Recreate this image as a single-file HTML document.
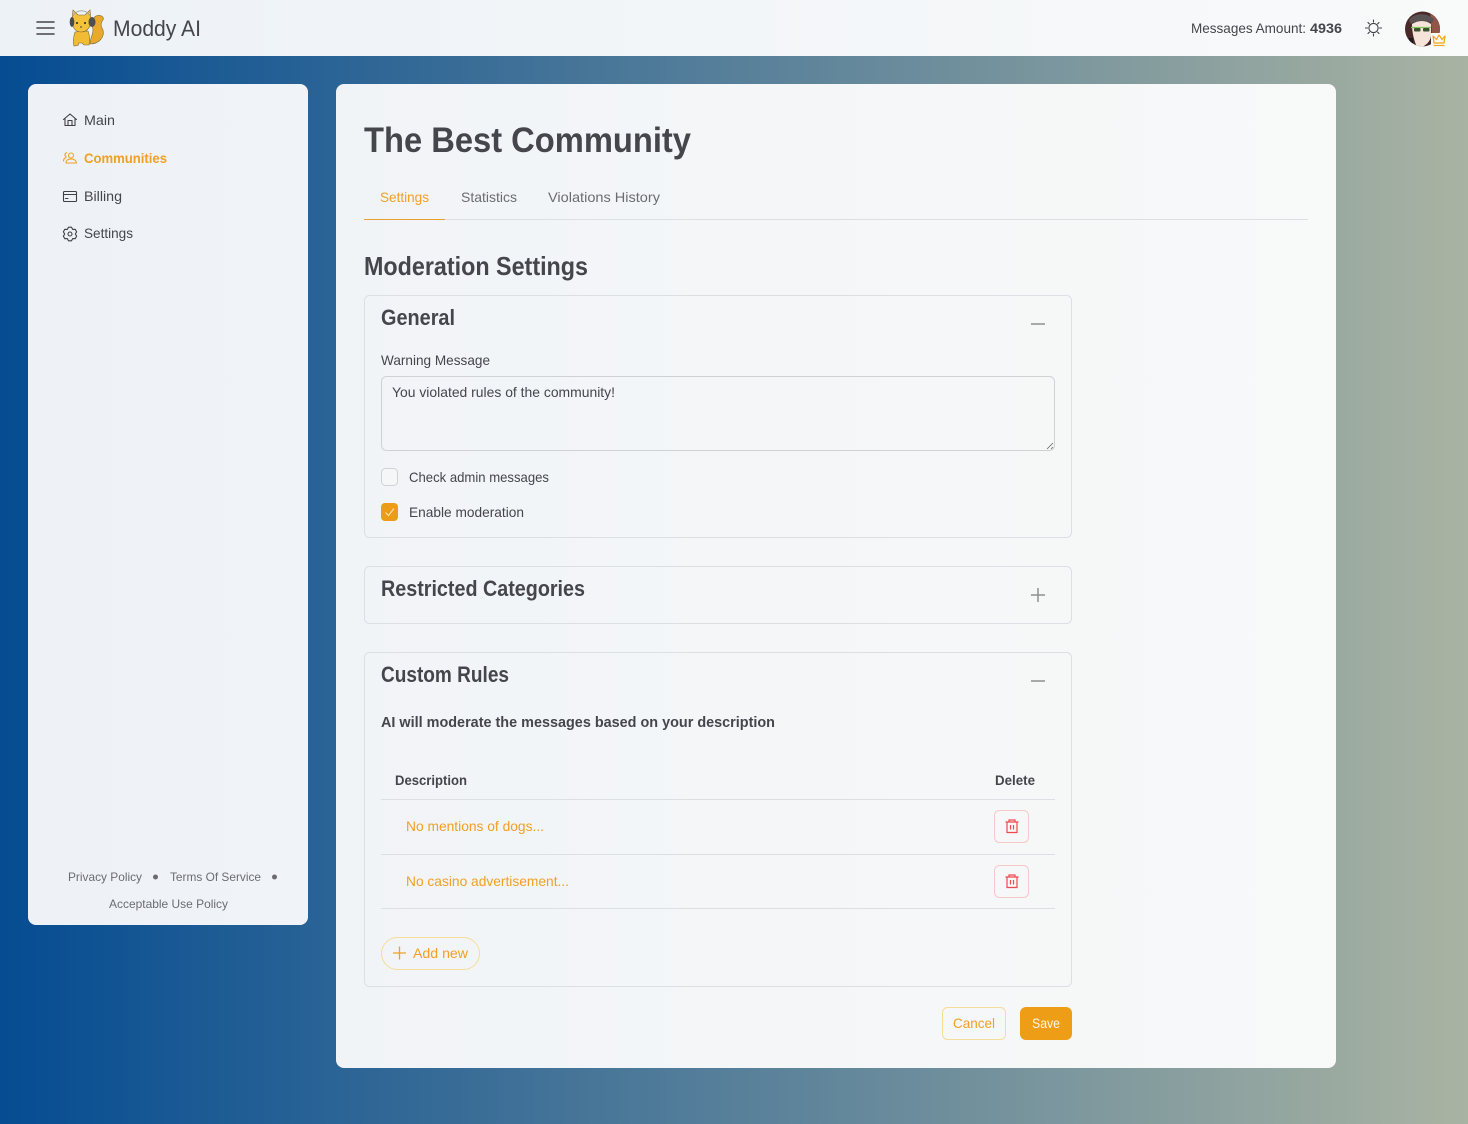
<!DOCTYPE html>
<html lang="en"><head><meta charset="utf-8"><title>Moddy AI</title>
<style>
html,body{margin:0;padding:0;width:1468px;height:1124px;overflow:hidden;background:#fff}
svg{display:block}
text{font-family:"Liberation Sans",Arial,sans-serif;fill:#45454c;font-size:14px}
.b{font-weight:700}
.o{fill:#f0a024}
.i{fill:none;stroke:#3f3f46;stroke-width:1.1;stroke-linecap:round;stroke-linejoin:round}
.g{fill:#6c6c70}
.card{fill:none;stroke:#dcdfe4;stroke-width:1}
.ln{stroke:#dcdfe4;stroke-width:1}
</style></head><body>
<svg width="1468" height="1124" viewBox="0 0 1468 1124" xmlns="http://www.w3.org/2000/svg">
<defs>
<linearGradient id="bg" x1="0" y1="0" x2="1" y2="0"><stop offset="0" stop-color="#054c92"/><stop offset="1" stop-color="#a9b3a2"/></linearGradient>
<linearGradient id="hd" x1="0" y1="0" x2="1" y2="0"><stop offset="0" stop-color="#edf2f7"/><stop offset="1" stop-color="#f9fafa"/></linearGradient>
<linearGradient id="sb" x1="0" y1="0" x2="1" y2="0"><stop offset="0" stop-color="#eef2f7"/><stop offset="1" stop-color="#f0f3f7"/></linearGradient>
<linearGradient id="mn" x1="0" y1="0" x2="1" y2="0"><stop offset="0" stop-color="#f1f4f7"/><stop offset="1" stop-color="#f8f9f9"/></linearGradient>
<clipPath id="av"><circle cx="1422.5" cy="29" r="17.5"/></clipPath>
</defs>
<rect width="1468" height="1124" fill="url(#bg)"/>
<rect width="1468" height="56" fill="url(#hd)"/>
<rect x="28" y="84" width="280" height="841" rx="8" fill="url(#sb)"/>
<rect x="336" y="84" width="1000" height="984" rx="8" fill="url(#mn)"/>

<!-- header -->
<path d="M37 22H54M37 28H54M37 34H54" stroke="#45454c" stroke-width="1.6" fill="none" stroke-linecap="round"/>
<g stroke="#7a6a3a" stroke-width=".6">
<path d="M90 44C98 44 105 38 103 30C101 26 100 24 103 20C105 17 100 14 96 16C92 18 92 24 93 30C93 35 90 38 90 44Z" fill="#e9a92b"/>
<path d="M75 32C73 38 73 42 74 46L78 45.500L79 43L82 43L84 45L89 45C90 40 90 36 88 31Z" fill="#f1bb34"/>
<path d="M73 10L78 15H85L90 10L91 20C91 27 87 32 81 32C75 32 72 27 72 20Z" fill="#f3c23a"/>
</g>
<path d="M73 16C76 9 87 9 90 16" fill="none" stroke="#a8a8a4" stroke-width="1"/>
<ellipse cx="72" cy="22" rx="2.300" ry="5" fill="#4b4b4b"/>
<ellipse cx="92" cy="22" rx="3.500" ry="5" fill="#4f4f50"/>
<circle cx="77" cy="23" r="1" fill="#222"/><circle cx="85" cy="23" r="1" fill="#222"/>
<path d="M80 27h2" stroke="#443" stroke-width="1"/>
<text x="113" y="36" style="font-size:22px" fill="#45454c" textLength="88" lengthAdjust="spacingAndGlyphs">Moddy AI</text>

<text x="1191" y="33" textLength="115" lengthAdjust="spacingAndGlyphs">Messages Amount:</text>
<text x="1310" y="33" class="b" textLength="32" lengthAdjust="spacingAndGlyphs">4936</text>
<g class="i"><circle cx="1373.5" cy="28" r="4.6"/><path d="M1373.5 20v2M1373.5 34v2M1365.5 28h2M1379.5 28h2M1368 22.5l1.3 1.3M1379 22.5l-1.3 1.3M1368 33.5l1.3-1.3M1379 33.5l-1.3-1.3"/></g>
<g clip-path="url(#av)">
<rect x="1405" y="11" width="36" height="36" fill="#4a2a28"/>
<path d="M1430 11h11v24l-9 0Z" fill="#935548"/>
<path d="M1409 20C1414 13 1426 12 1434 19L1432 23C1426 20 1416 20 1411 24Z" fill="#5a5254"/>
<path d="M1412 24C1418 20 1426 20 1431 24L1431 36C1430 42 1426 45 1422 47L1417 47C1414 41 1412 32 1412 24Z" fill="#f4e4da"/>
<path d="M1411 27.500H1431" stroke="#83c85e" stroke-width="1.300"/>
<rect x="1414" y="28" width="6.500" height="3.500" rx="1" fill="#39512f"/><rect x="1423" y="28" width="6.500" height="3.500" rx="1" fill="#39512f"/>
<path d="M1409 38h4v5h-4z" fill="#1f1a1c"/>
</g>
<rect x="1431" y="33" width="17" height="15" fill="#f9fafa"/>
<path d="M1433 36L1436.500 39.500L1439 35L1442 39.500L1445 36L1444 43H1434Z" fill="#fdf8ea" stroke="#f2a51f" stroke-width="1.200" stroke-linejoin="round"/>
<path d="M1433.500 45.500H1444.500" stroke="#f2a51f" stroke-width="1.200"/>

<!-- sidebar -->
<g class="i"><path d="M63.500 119.500L70 114L76.500 119.500M65 118.500V125.500H75V118.500M68 125.500V120.500H72V125.500"/></g>
<text x="84" y="125" textLength="31" lengthAdjust="spacingAndGlyphs">Main</text>
<g class="i" style="stroke:#f0a024"><circle cx="71" cy="155.500" r="2.500"/><path d="M66 163C66 160 68 159 71 159C74 159 76 160 76.500 163ZM63.500 161C63.500 159 64.500 158 66 157.500M66.500 152.800A2 2 0 0 0 66 156.500"/></g>
<text x="84" y="163" class="b o" textLength="83" lengthAdjust="spacingAndGlyphs">Communities</text>
<g class="i"><rect x="63.500" y="191.500" width="13" height="10" rx="1"/><path d="M63.500 194.500H76.500M65.500 198.500H68"/></g>
<text x="84" y="201" textLength="38" lengthAdjust="spacingAndGlyphs">Billing</text>
<g class="i"><path d="M68.540 227.150L71.460 227.150L72.650 229.410L75.200 229.320L76.660 231.840L75.300 234L76.660 236.160L75.200 238.680L72.650 238.590L71.460 240.850L68.540 240.850L67.350 238.590L64.800 238.680L63.340 236.160L64.700 234L63.340 231.840L64.800 229.320L67.350 229.410Z"/><circle cx="70" cy="234" r="2"/></g>
<text x="84" y="238" textLength="49" lengthAdjust="spacingAndGlyphs">Settings</text>

<text x="68" y="881" class="g" style="font-size:12px" textLength="74" lengthAdjust="spacingAndGlyphs">Privacy Policy</text>
<circle cx="155.500" cy="877" r="2.500" fill="#6c6c70"/>
<text x="170" y="881" class="g" style="font-size:12px" textLength="91" lengthAdjust="spacingAndGlyphs">Terms Of Service</text>
<circle cx="274.500" cy="877" r="2.500" fill="#6c6c70"/>
<text x="109" y="908" class="g" style="font-size:12px" textLength="119" lengthAdjust="spacingAndGlyphs">Acceptable Use Policy</text>

<!-- main -->
<text x="364" y="152" class="b" style="font-size:35px" textLength="327" lengthAdjust="spacingAndGlyphs">The Best Community</text>
<text x="380" y="202" class="o" textLength="49" lengthAdjust="spacingAndGlyphs">Settings</text>
<text x="461" y="202" class="g" textLength="56" lengthAdjust="spacingAndGlyphs">Statistics</text>
<text x="548" y="202" class="g" textLength="112" lengthAdjust="spacingAndGlyphs">Violations History</text>
<path d="M364 219.500H1308" class="ln"/>
<rect x="364" y="219" width="81" height="1" fill="#e9a033"/>
<text x="364" y="275" class="b" style="font-size:26px" textLength="224" lengthAdjust="spacingAndGlyphs">Moderation Settings</text>

<!-- General -->
<rect x="364.500" y="295.500" width="707" height="242" rx="5" class="card"/>
<text x="381" y="325" class="b" style="font-size:22px" textLength="74" lengthAdjust="spacingAndGlyphs">General</text>
<path d="M1031 324H1045" stroke="#8f8f8f" stroke-width="1.500"/>
<text x="381" y="365" textLength="109" lengthAdjust="spacingAndGlyphs">Warning Message</text>
<rect x="381.500" y="376.500" width="673" height="74" rx="5" fill="none" stroke="#cfd1d3"/>
<path d="M1047 449L1053 443M1051 449L1053 447" stroke="#666" stroke-width=".8"/>
<text x="392" y="397" textLength="223" lengthAdjust="spacingAndGlyphs">You violated rules of the community!</text>
<rect x="381.500" y="468.500" width="16" height="17" rx="4" fill="#f4f6f8" stroke="#cfd2d6"/>
<text x="409" y="482" textLength="140" lengthAdjust="spacingAndGlyphs">Check admin messages</text>
<rect x="381" y="503" width="17" height="18" rx="4" fill="#ec9c16"/>
<path d="M385.500 512.500L388.500 515.500L394 508.500" fill="none" stroke="#fbe3b8" stroke-width="1.100"/>
<text x="409" y="517" textLength="115" lengthAdjust="spacingAndGlyphs">Enable moderation</text>

<!-- Restricted -->
<rect x="364.500" y="566.500" width="707" height="57" rx="5" class="card"/>
<text x="381" y="596" class="b" style="font-size:22px" textLength="204" lengthAdjust="spacingAndGlyphs">Restricted Categories</text>
<path d="M1031 595H1045M1038 588V602" stroke="#8f8f8f" stroke-width="1.500"/>

<!-- Custom -->
<rect x="364.500" y="652.500" width="707" height="334" rx="5" class="card"/>
<text x="381" y="682" class="b" style="font-size:22px" textLength="128" lengthAdjust="spacingAndGlyphs">Custom Rules</text>
<path d="M1031 681H1045" stroke="#8f8f8f" stroke-width="1.500"/>
<text x="381" y="727" class="b" style="font-size:15px" textLength="394" lengthAdjust="spacingAndGlyphs">AI will moderate the messages based on your description</text>
<text x="395" y="785" class="b" textLength="72" lengthAdjust="spacingAndGlyphs">Description</text>
<text x="995" y="785" class="b" textLength="40" lengthAdjust="spacingAndGlyphs">Delete</text>
<path d="M381 799.500H1055M381 854.500H1055M381 908.500H1055" class="ln"/>
<text x="406" y="831" class="o" textLength="138" lengthAdjust="spacingAndGlyphs">No mentions of dogs...</text>
<text x="406" y="886" class="o" textLength="163" lengthAdjust="spacingAndGlyphs">No casino advertisement...</text>
<rect x="994.500" y="810.500" width="34" height="32" rx="5" fill="none" stroke="#f7c8c8"/>
<rect x="994.500" y="865.500" width="34" height="32" rx="5" fill="none" stroke="#f7c8c8"/>
<g fill="none" stroke="#f0484e" stroke-width="1.200">
<path d="M1005.500 822H1018.500M1007 822V832.500H1017V822M1009 822V820H1015V822M1010.500 825V829.500M1013.500 825V829.500"/>
<path d="M1005.500 877H1018.500M1007 877V887.500H1017V877M1009 877V875H1015V877M1010.500 880V884.500M1013.500 880V884.500"/>
</g>
<rect x="381.500" y="937.500" width="98" height="32" rx="16" fill="none" stroke="#f5dc98"/>
<path d="M393 953H406M399.500 946.500V959.500" stroke="#f0a024" stroke-width="1.300"/>
<text x="413" y="958" class="o" textLength="55" lengthAdjust="spacingAndGlyphs">Add new</text>

<rect x="942.500" y="1007.500" width="63" height="32" rx="5" fill="none" stroke="#f5dc98"/>
<text x="953" y="1028" class="o" textLength="42" lengthAdjust="spacingAndGlyphs">Cancel</text>
<rect x="1020" y="1007" width="52" height="33" rx="6" fill="#ee9d17"/>
<text x="1032" y="1028" style="fill:#fdf6ea" textLength="28" lengthAdjust="spacingAndGlyphs">Save</text>
</svg>
</body></html>
